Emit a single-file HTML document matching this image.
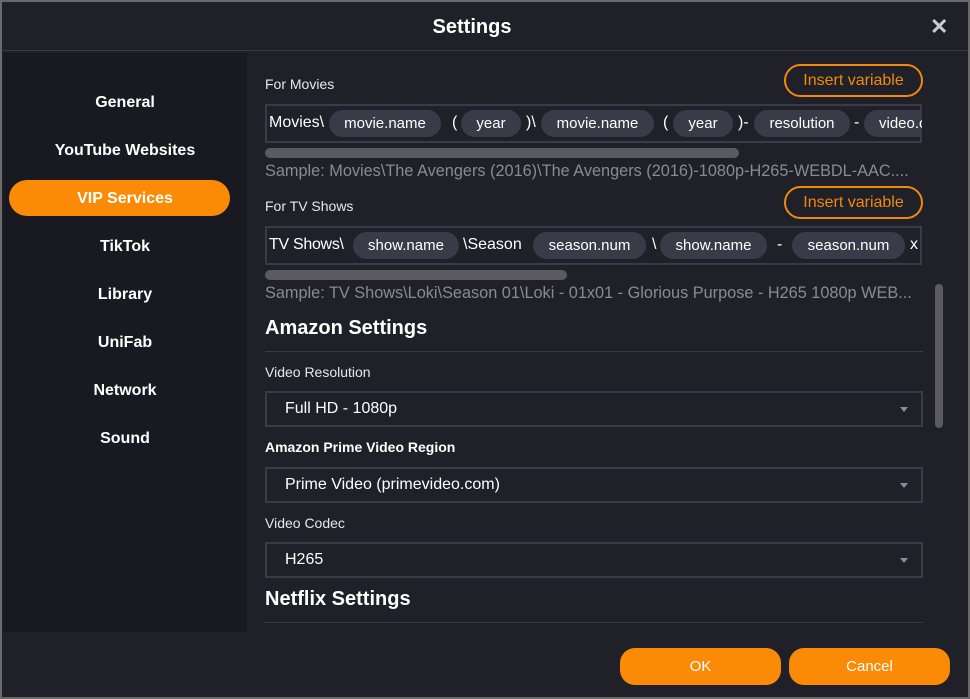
<!DOCTYPE html>
<html><head><style>
*{margin:0;padding:0;box-sizing:border-box}
body{width:970px;height:699px;background:#6a6a6a;font-family:"Liberation Sans",sans-serif;overflow:hidden;position:relative}
.win{position:absolute;left:2px;top:2px;width:966px;height:695px;background:#202029}
.a{position:absolute;white-space:nowrap}
.side{position:absolute;left:3px;top:53px;width:244px;height:579px;background:#191921}
.nav{position:absolute;left:0;width:244px;text-align:center;color:#fff;font-weight:bold;font-size:16px}
.pill{position:absolute;height:27px;line-height:27px;background:#3a3a48;border-radius:14px;color:#fff;font-size:15px;text-align:center}
.t{position:absolute;color:#fff;font-size:16px;line-height:20px;white-space:nowrap}
.box{position:absolute;left:265px;width:657px;border:2px solid #3a3a4a;overflow:hidden}
.ins{position:absolute;left:784px;width:139px;height:33px;border:2px solid #f08a0e;border-radius:17px;color:#f08a0e;font-size:16px;text-align:center;line-height:29px}
.lbl{position:absolute;left:265px;color:#e8e8e8;font-size:14px}
.sel{position:absolute;left:265px;width:658px;height:36px;border:2px solid #3a3a4a;color:#fff;font-size:16px;line-height:32px;padding-left:18px}
.sel:after{content:"";position:absolute;right:13px;top:14px;border-left:4px solid transparent;border-right:4px solid transparent;border-top:5px solid #8a8aa0}
.h{position:absolute;left:265px;color:#fff;font-weight:bold;font-size:20px}
.hr{position:absolute;left:265px;width:658px;height:1px;background:#3a3a4a}
.btn{position:absolute;top:648px;width:161px;height:37px;background:#fb8a07;border-radius:15px;color:#fff;font-size:15px;text-align:center;line-height:38px}
.samp{position:absolute;left:265px;color:#8a8a8f;font-size:16.3px;white-space:nowrap}
.bar{position:absolute;left:265px;height:10px;background:#5a5a60;border-radius:5px}
</style></head><body>
<div class="win"></div>
<div class="a" style="left:0;top:16px;width:944px;text-align:center;color:#fff;font-weight:bold;font-size:20px">Settings</div>
<div class="a" style="left:930px;top:14px;color:#ccc;font-size:22px;font-weight:bold">✕</div>
<div class="a" style="left:2px;top:50px;width:966px;height:1px;background:#3a3a44"></div>
<div class="side">
<div class="nav" style="top:41px">General</div>
<div class="nav" style="top:89px">YouTube Websites</div>
<div style="position:absolute;left:6px;top:127px;width:221px;height:36px;background:#fb8a07;border-radius:18px"></div>
<div class="nav" style="top:137px">VIP Services</div>
<div class="nav" style="top:185px">TikTok</div>
<div class="nav" style="top:233px">Library</div>
<div class="nav" style="top:281px">UniFab</div>
<div class="nav" style="top:329px">Network</div>
<div class="nav" style="top:377px">Sound</div>
</div>
<div class="lbl" style="top:76px">For Movies</div>
<div class="ins" style="top:64px">Insert variable</div>
<div class="box" style="top:104px;height:39px"></div>
<div class="t" style="left:269px;top:113px">Movies\</div>
<div class="pill" style="left:329px;top:110px;width:112px">movie.name</div>
<div class="t" style="left:452px;top:113px">(</div>
<div class="pill" style="left:461px;top:110px;width:60px">year</div>
<div class="t" style="left:526px;top:113px">)\</div>
<div class="pill" style="left:541px;top:110px;width:113px">movie.name</div>
<div class="t" style="left:663px;top:113px">(</div>
<div class="pill" style="left:673px;top:110px;width:60px">year</div>
<div class="t" style="left:738px;top:113px">)-</div>
<div class="pill" style="left:754px;top:110px;width:96px">resolution</div>
<div class="t" style="left:854px;top:113px">-</div>
<div class="pill" style="left:864px;top:110px;width:58px;border-radius:14px 0 0 14px;text-align:left;padding-left:15px;overflow:hidden">video.c</div>
<div class="bar" style="top:148px;width:474px"></div>
<div class="samp" style="top:162px">Sample: Movies\The Avengers (2016)\The Avengers (2016)-1080p-H265-WEBDL-AAC....</div>
<div class="lbl" style="top:198px">For TV Shows</div>
<div class="ins" style="top:186px">Insert variable</div>
<div class="box" style="top:226px;height:39px"></div>
<div class="t" style="left:269px;top:235px;letter-spacing:-0.3px">TV Shows\</div>
<div class="pill" style="left:353px;top:232px;width:106px">show.name</div>
<div class="t" style="left:463px;top:235px">\Season</div>
<div class="pill" style="left:533px;top:232px;width:113px">season.num</div>
<div class="t" style="left:652px;top:235px">\</div>
<div class="pill" style="left:660px;top:232px;width:107px">show.name</div>
<div class="t" style="left:777px;top:235px">-</div>
<div class="pill" style="left:792px;top:232px;width:113px">season.num</div>
<div class="t" style="left:910px;top:235px">x</div>
<div class="bar" style="top:270px;width:302px"></div>
<div class="samp" style="top:284px">Sample: TV Shows\Loki\Season 01\Loki - 01x01 - Glorious Purpose - H265 1080p WEB...</div>
<div class="a" style="left:935px;top:284px;width:8px;height:144px;background:#5a5a60;border-radius:4px"></div>
<div class="h" style="top:317px">Amazon Settings</div>
<div class="hr" style="top:351px"></div>
<div class="lbl" style="top:364px">Video Resolution</div>
<div class="sel" style="top:391px">Full HD - 1080p</div>
<div class="lbl" style="top:439px;font-weight:bold;color:#fff">Amazon Prime Video Region</div>
<div class="sel" style="top:467px">Prime Video (primevideo.com)</div>
<div class="lbl" style="top:515px">Video Codec</div>
<div class="sel" style="top:542px">H265</div>
<div class="h" style="top:588px">Netflix Settings</div>
<div class="hr" style="top:622px"></div>
<div class="btn" style="left:620px">OK</div>
<div class="btn" style="left:789px">Cancel</div>
</body></html>
